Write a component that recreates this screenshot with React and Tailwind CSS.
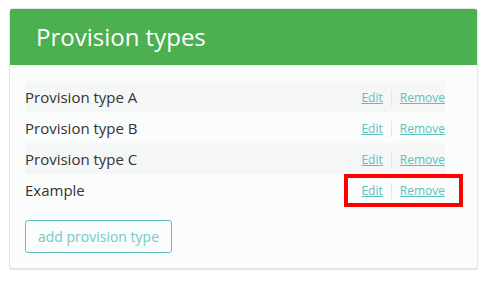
import React from 'react';

const types = ['Provision type A', 'Provision type B', 'Provision type C', 'Example'];

export default function App() {
  return (
    <div className="w-[490px] h-[284px] bg-white pt-[8px] pl-[9px]" style={{ fontFamily: '"Open Sans", sans-serif' }}>
      <div className="w-[469px] border border-[#e3e6e6] rounded-[3px] bg-[#fbfcfc] shadow-[0_1px_1px_rgba(0,0,0,0.12)]">
        {/* Header */}
        <div className="h-[56px] bg-[#4caf50] rounded-t-[2px] flex items-center pl-[26px]">
          <h2 className="text-[24px] text-white leading-none">Provision types</h2>
        </div>

        {/* Body */}
        <div className="pt-[16px] pb-[15px] pl-[15px]">
          <div className="w-[420px]">
            {types.map((name, i) => (
              <div
                key={name}
                className={`relative h-[31px] flex items-center justify-between ${i % 2 === 0 ? 'bg-[#f5f7f7]' : ''}`}
              >
                <span className="text-[15px] text-[#333] pt-[1px]">{name}</span>
                <div className="flex items-center text-[12px] text-[#5bc0be] pt-[3px]">
                  <a className="underline pr-[8px]">Edit</a>
                  <span className="w-px h-[16px] bg-[#e2e6ea]" />
                  <a className="underline pl-[8px]">Remove</a>
                </div>
                {name === 'Example' && (
                  <div className="absolute left-[319px] top-0 w-[119px] h-[33px] border-[4px] border-[#ff0000]" />
                )}
              </div>
            ))}
          </div>
          <button className="mt-[15px] h-[33px] w-[147px] border border-[#5bc0be] rounded-[3px] text-[14px] text-[#74c9c7] bg-transparent">
            add provision type
          </button>
        </div>
      </div>
    </div>
  );
}
